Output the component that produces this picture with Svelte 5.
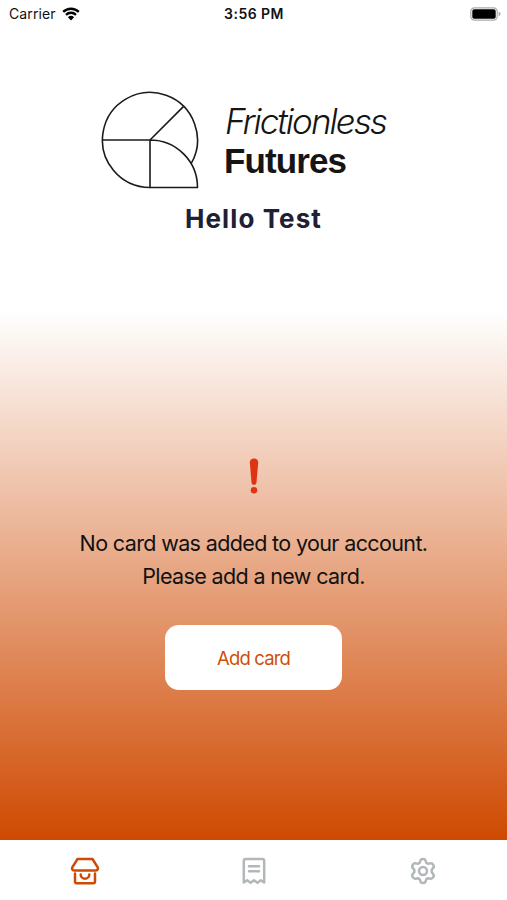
<script lang="ts">
  type Tab = 'shop' | 'receipts' | 'settings';

  const userName = 'Test';
  const tabs: { id: Tab; label: string }[] = [
    { id: 'shop', label: 'Shop' },
    { id: 'receipts', label: 'Receipts' },
    { id: 'settings', label: 'Settings' }
  ];

  let activeTab = $state<Tab>('shop');
</script>

<div class="screen">
  <div class="status-bar">
    <div class="carrier">
      <span>Carrier</span>
      <svg class="wifi" viewBox="0 0 18 14" width="18" height="14">
        <path d="M1.2 4.9a11.2 11.2 0 0 1 15.6 0M4 7.8a7.2 7.2 0 0 1 10 0" />
        <path class="dot" d="M9 13.5 5.9 10.3a4.5 4.5 0 0 1 6.2 0z" />
      </svg>
    </div>
    <span class="time">3:56 PM</span>
    <svg class="battery" viewBox="0 0 31 14" width="31" height="14">
      <rect class="shell" x="0.8" y="0.8" width="26.4" height="12.4" rx="3.6" />
      <rect x="2.3" y="2.3" width="23.4" height="9.4" rx="1.8" />
      <path class="cap" d="M28.7 4.8q2 .6 2 2.2t-2 2.2z" />
    </svg>
  </div>

  <main>
    <header>
      <div class="brand">
        <svg class="mark" viewBox="0 0 98 98" width="98" height="98">
          <path d="M49 96.5A47.5 47.5 0 1 1 90.1 72.7" />
          <path d="M1.5 49H49A47.5 47.5 0 0 1 96.5 96.5H49V49L82.6 15.4" />
        </svg>
        <div class="wordmark">
          <span class="light">Frictionless</span>
          <span class="bold">Futures</span>
        </div>
      </div>
      <h1>Hello {userName}</h1>
    </header>

    <section class="empty">
      <svg class="alert" viewBox="0 0 10 36" width="10" height="36">
        <path d="M.8 4.5C.8 1.8 2.5.4 5 .4s4.2 1.4 4.2 4.1L7.5 24.5C7.3 26 6.4 26.8 5 26.8S2.7 26 2.5 24.5z" />
        <circle cx="5" cy="32.2" r="3.2" />
      </svg>
      <p>
        <span>No card was added to your account.</span>
        <span>Please add a new card.</span>
      </p>
      <button class="add" type="button">Add card</button>
    </section>
  </main>

  <nav>
    {#each tabs as tab}
      <button
        class="tab"
        class:active={activeTab === tab.id}
        type="button"
        aria-label={tab.label}
        onclick={() => (activeTab = tab.id)}
      >
        <svg viewBox="0 0 30 30" width="30" height="30">
          {#if tab.id === 'shop'}
            <path d="M7.5 3h15l5.2 8.4c.7 1.5 0 3-1.7 3H4c-1.700 0-2.400-1.500-1.700-3z" />
            <path d="M5 17.500V25.500q0 1.800 1.800 1.800h16.400q1.800 0 1.800-1.800V17.500M10.700 18.500a4.300 4.200 0 0 0 8.600 0" />
          {:else if tab.id === 'receipts'}
            <path d="M4.800 26.500V5q0-2 2-2H23.200q2 0 2 2V26.500L21.800 24.300 18.400 26.800 15 24.300 11.600 26.800 8.200 24.300z" />
            <path d="M10 10.300h10M10 15.300h10" />
          {:else}
            <path d="M12.300 5Q12.600 3 15 3t2.700 2l.5 1.700 2 1.100 1.700-.4q2.200-.6 3.400 1.400t-.4 3.600L23.700 13.800v2.400l1.200 1.400q1.600 1.600.4 3.600t-3.400 1.400l-1.700-.4-2 1.100L17.700 25Q17.400 27 15 27t-2.700-2l-.5-1.700-2-1.100-1.700.4q-2.200.6-3.400-1.400t.4-3.600l1.200-1.400v-2.400L5.100 12.400Q3.500 10.800 4.700 8.800t3.400-1.400l1.700.4 2-1.100z" />
            <circle cx="15" cy="15" r="4" />
          {/if}
        </svg>
      </button>
    {/each}
  </nav>
</div>

<style>
  :global(body) {
    margin: 0;
  }

  .screen {
    display: flex;
    flex-direction: column;
    width: 507px;
    height: 900px;
    overflow: hidden;
    font-family: Inter, 'Liberation Sans', sans-serif;
    color: #111;
    background: #fff;
  }

  .status-bar {
    display: grid;
    grid-template-columns: 1fr auto 1fr;
    align-items: center;
    height: 27px;
    padding: 0 6px 0 9px;
    font-size: 14px;
  }

  .carrier {
    display: flex;
    align-items: center;
    gap: 6px;
    letter-spacing: 0.1px;
  }

  .wifi {
    fill: none;
    stroke: #000;
    stroke-width: 2.4;
  }

  .wifi .dot {
    fill: #000;
    stroke: none;
  }

  .time {
    padding-right: 2px;
    font-weight: 600;
    letter-spacing: 0.45px;
  }

  .battery {
    justify-self: end;
  }

  .battery .shell {
    fill: none;
    stroke: #aaa;
    stroke-width: 1.2;
  }

  .battery .cap {
    fill: #aaa;
  }

  main {
    display: flex;
    flex: 1;
    flex-direction: column;
    background: linear-gradient(#fff 284px, #cf4a02 812px);
  }

  header {
    height: 278px;
    padding-top: 64px;
    box-sizing: border-box;
  }

  .brand {
    display: flex;
    gap: 25px;
    padding-left: 101px;
  }

  .mark {
    fill: none;
    stroke: #1b1b1b;
    stroke-width: 1.6;
    stroke-linejoin: round;
  }

  .wordmark {
    display: flex;
    flex-direction: column;
    padding-top: 11px;
    font-size: 35px;
    line-height: 39px;
    color: #151515;
  }

  .light {
    padding-left: 1px;
    font-style: italic;
    font-weight: 300;
    letter-spacing: -1.95px;
  }

  .bold {
    font-family: 'Liberation Sans', Arial, sans-serif;
    font-weight: 700;
    letter-spacing: -0.9px;
  }

  h1 {
    margin: 14px 0 0;
    font-size: 26px;
    line-height: 32px;
    font-weight: 700;
    letter-spacing: 1.1px;
    text-align: center;
    color: #1d2036;
  }

  .empty {
    display: flex;
    flex-direction: column;
    align-items: center;
    padding-top: 153px;
  }

  .alert {
    fill: #df3413;
  }

  p {
    display: flex;
    flex-direction: column;
    margin: 33px 0 0;
    font-size: 21.5px;
    line-height: 33px;
    letter-spacing: -0.63px;
    text-align: center;
  }

  .add {
    width: 177px;
    height: 65px;
    margin-top: 32px;
    padding: 0;
    border: 0;
    border-radius: 14px;
    background: #fff;
    color: #cf4f0a;
    font: inherit;
    font-size: 18.5px;
    letter-spacing: -0.85px;
  }

  nav {
    display: grid;
    grid-template-columns: repeat(3, 1fr);
    height: 60px;
    background: #fff;
  }

  .tab {
    display: flex;
    justify-content: center;
    padding: 16px 0 0;
    border: 0;
    background: none;
    color: #b2b7ba;
  }

  .tab.active {
    color: #cf4a02;
  }

  .tab svg {
    fill: none;
    stroke: currentColor;
    stroke-width: 2.5;
    stroke-linecap: round;
    stroke-linejoin: round;
  }
</style>
